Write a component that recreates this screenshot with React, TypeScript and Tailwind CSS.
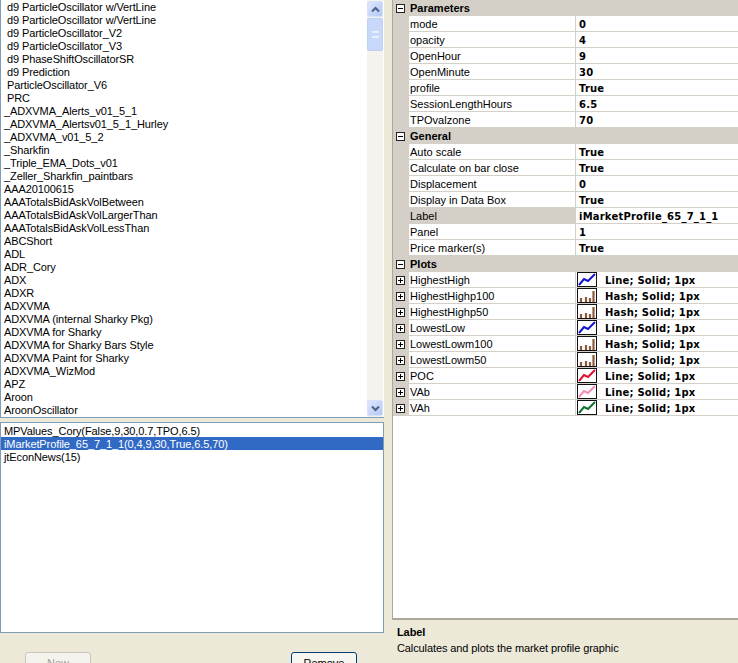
const indicators = [
  " d9 ParticleOscillator w/VertLine",
  " d9 ParticleOscillator w/VertLine",
  " d9 ParticleOscillator_V2",
  " d9 ParticleOscillator_V3",
  " d9 PhaseShiftOscillatorSR",
  " d9 Prediction",
  " ParticleOscillator_V6",
  " PRC",
  "_ADXVMA_Alerts_v01_5_1",
  "_ADXVMA_Alertsv01_5_1_Hurley",
  "_ADXVMA_v01_5_2",
  "_Sharkfin",
  "_Triple_EMA_Dots_v01",
  "_Zeller_Sharkfin_paintbars",
  "AAA20100615",
  "AAATotalsBidAskVolBetween",
  "AAATotalsBidAskVolLargerThan",
  "AAATotalsBidAskVolLessThan",
  "ABCShort",
  "ADL",
  "ADR_Cory",
  "ADX",
  "ADXR",
  "ADXVMA",
  "ADXVMA (internal Sharky Pkg)",
  "ADXVMA for Sharky",
  "ADXVMA for Sharky Bars Style",
  "ADXVMA Paint for Sharky",
  "ADXVMA_WizMod",
  "APZ",
  "Aroon",
  "AroonOscillator",
];

const applied = [
  "MPValues_Cory(False,9,30,0.7,TPO,6.5)",
  "iMarketProfile_65_7_1_1(0,4,9,30,True,6.5,70)",
  "jtEconNews(15)",
];

const sections = [
  {
    title: "Parameters",
    rows: [
      ["mode", "0"],
      ["opacity", "4"],
      ["OpenHour", "9"],
      ["OpenMinute", "30"],
      ["profile", "True"],
      ["SessionLengthHours", "6.5"],
      ["TPOvalzone", "70"],
    ],
  },
  {
    title: "General",
    rows: [
      ["Auto scale", "True"],
      ["Calculate on bar close", "True"],
      ["Displacement", "0"],
      ["Display in Data Box", "True"],
      ["Label", "iMarketProfile_65_7_1_1"],
      ["Panel", "1"],
      ["Price marker(s)", "True"],
    ],
  },
];

const plots = [
  { name: "HighestHigh", kind: "line", color: "#1414d2" },
  { name: "HighestHighp100", kind: "hash", color: "#8b5a3c" },
  { name: "HighestHighp50", kind: "hash", color: "#8b5a3c" },
  { name: "LowestLow", kind: "line", color: "#1414d2" },
  { name: "LowestLowm100", kind: "hash", color: "#8b5a3c" },
  { name: "LowestLowm50", kind: "hash", color: "#8b5a3c" },
  { name: "POC", kind: "line", color: "#e01030" },
  { name: "VAb", kind: "line", color: "#f48cb4" },
  { name: "VAh", kind: "line", color: "#107030" },
];

function TreeBox({ open }: { open?: boolean }) {
  return (
    <svg width="9" height="9" viewBox="0 0 9 9" className="block">
      <rect x="0.5" y="0.5" width="8" height="8" fill="#fff" stroke="#222" />
      <path d="M2 4.5h5" stroke="#000" />
      {!open && <path d="M4.5 2v5" stroke="#000" />}
    </svg>
  );
}

function Swatch({ kind, color }: { kind: string; color: string }) {
  return (
    <svg width="20" height="15" viewBox="0 0 20 15" className="-mt-[2px] block shrink-0">
      <rect x="0.5" y="0.5" width="19" height="14" fill="#fff" stroke="#111" />
      {kind === "line" ? (
        <path d="M2 13 L7 7 L11 9 L18 2" fill="none" stroke={color} strokeWidth="2" />
      ) : (
        <path d="M4 14V10M9 14V9M13 14V10M16.5 14V3" fill="none" stroke={color} strokeWidth="2.2" />
      )}
    </svg>
  );
}

function ScrollButton({ down }: { down?: boolean }) {
  return (
    <div className="flex h-[16px] w-[16px] shrink-0 items-center justify-center rounded-[2px] border border-[#d6e2fb] bg-gradient-to-br from-[#dde7fd] to-[#b5c9f5]">
      <svg width="9" height="7" viewBox="0 0 9 7">
        <path d={down ? "M1 1.5l3.5 3.5L8 1.5" : "M1 5.5L4.5 2 8 5.5"} fill="none" stroke="#4d6185" strokeWidth="2" />
      </svg>
    </div>
  );
}

function Row({ gutter, name, selected, children }: { gutter?: React.ReactNode; name: string; selected?: boolean; children: React.ReactNode }) {
  return (
    <div className="flex h-4">
      <div className="flex w-[16px] shrink-0 items-center bg-[#d4d0c8] pl-[3px]">{gutter}</div>
      <div className={`flex w-[167px] shrink-0 items-center border-r border-b border-[#d4d0c8] pt-[2px] pl-[1px] ${selected ? "bg-[#d4d0c8]" : ""}`}>
        {name}
      </div>
      <div className="flex flex-1 items-center border-b border-[#d4d0c8] pt-[2px] pl-[3px] font-['DejaVu_Sans',sans-serif] text-[10px] font-bold tracking-[0.2px]">
        {children}
      </div>
    </div>
  );
}

function SectionHeader({ title }: { title: string }) {
  return (
    <div className="flex h-4 items-center bg-[#d4d0c8] font-bold">
      <div className="flex w-[16px] shrink-0 items-center pl-[3px]">
        <TreeBox open />
      </div>
      <span className="pl-[1px]">{title}</span>
    </div>
  );
}

export default function App() {
  return (
    <div className="flex h-[663px] w-[738px] overflow-hidden bg-[#ece9d8] font-['Liberation_Sans',sans-serif] text-[11px] leading-[13px] text-black">
      <div className="flex w-[384px] shrink-0 flex-col">
        <div className="flex h-[418px] shrink-0 border-b border-l border-[#7f9db9] bg-white">
          <div className="flex-1 pl-[3px] tracking-[-0.1px] whitespace-pre">
            {indicators.map((item, i) => (
              <div key={i} className="flex h-[13px] items-center pt-[2px]">
                {item}
              </div>
            ))}
          </div>
          <div className="mr-[1px] flex w-[16px] flex-col bg-[#f4f3ee] py-[1px]">
            <ScrollButton />
            <div className="mt-[1px] flex h-[33px] items-center justify-center rounded-[2px] border border-[#bcd0f8] bg-[#c8d8fb]">
              <div className="h-[7px] w-[7px] border-y-2 border-[#e8effd]" />
            </div>
            <div className="flex-1" />
            <ScrollButton down />
          </div>
        </div>
        <div className="mt-[4px] h-[211px] shrink-0 border border-[#7f9db9] bg-white pt-[1px] pl-[3px] tracking-[-0.1px] whitespace-pre">
          {applied.map((item, i) => (
            <div
              key={item}
              className={`-ml-[3px] flex h-[13px] items-center pt-[2px] pl-[3px] ${i === 1 ? "bg-[#316ac5] text-white" : ""}`}
            >
              {item}
            </div>
          ))}
        </div>
        <div className="mt-[19px] flex justify-between pr-[27px] pl-[25px]">
          <button className="h-[23px] w-[66px] rounded-[3px] border border-[#c9c7ba] bg-[#f4f3ee] text-[#a19f90]">New</button>
          <button className="h-[23px] w-[66px] rounded-[3px] border border-[#003c74] bg-[#f6f5ef]">Remove</button>
        </div>
      </div>

      <div className="ml-[8px] flex flex-1 flex-col">
        <div className="h-[620px] shrink-0 border-b-2 border-l border-[#aca899] bg-white leading-none">
          {sections.map((section) => (
            <div key={section.title}>
              <SectionHeader title={section.title} />
              {section.rows.map(([name, value]) => (
                <Row key={name} name={name} selected={name === "Label"}>
                  {value}
                </Row>
              ))}
            </div>
          ))}
          <SectionHeader title="Plots" />
          {plots.map((plot) => (
            <Row key={plot.name} name={plot.name} gutter={<TreeBox />}>
              <span className="-ml-[2px] flex items-center gap-[8px]">
                <Swatch kind={plot.kind} color={plot.color} />
                {plot.kind === "line" ? "Line; Solid; 1px" : "Hash; Solid; 1px"}
              </span>
            </Row>
          ))}
        </div>
        <div className="pt-[4px] pl-[5px] leading-[16px] tracking-[-0.1px]">
          <div className="font-bold">Label</div>
          <div>Calculates and plots the market profile graphic</div>
        </div>
      </div>
    </div>
  );
}
